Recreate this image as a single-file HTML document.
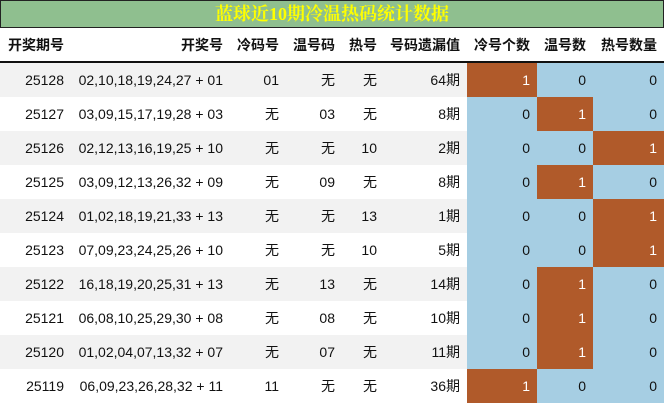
<!DOCTYPE html><html><head><meta charset="utf-8"><style>
body{margin:0;width:664px;height:404px;overflow:hidden;background:#fff;font-family:"Liberation Sans","Noto Sans CJK SC",sans-serif;font-size:14px;color:#111}
.title{position:absolute;left:0;top:0;width:662px;height:26px;background:#8fbf8f;border:1px solid #222;color:#ffff00;font-family:"Liberation Serif","Noto Serif CJK SC",serif;font-weight:bold;font-size:18px;line-height:26px;text-align:center}
table{position:absolute;left:0;top:28px;border-collapse:collapse;table-layout:fixed}
td{padding:0 7px 0 0;text-align:right;height:34px;white-space:nowrap}
tr.h td{font-weight:bold;height:33px;border-bottom:2px solid #111}
tr.g td{background:#f2f2f2}
td.b{background:#a6cee3!important}
td.o{background:#b05a2a!important;color:#fff}
</style></head><body>
<div class="title">蓝球近10期冷温热码统计数据</div>
<table>
<colgroup><col style="width:71px"><col style="width:159px"><col style="width:56px"><col style="width:56px"><col style="width:42px"><col style="width:83px"><col style="width:70px"><col style="width:56px"><col style="width:71px"></colgroup>
<tr class="h"><td>开奖期号</td><td>开奖号</td><td>冷码号</td><td>温号码</td><td>热号</td><td>号码遗漏值</td><td>冷号个数</td><td>温号数</td><td>热号数量</td></tr>
<tr class="g"><td>25128</td><td>02,10,18,19,24,27 + 01</td><td>01</td><td>无</td><td>无</td><td>64期</td><td class="o">1</td><td class="b">0</td><td class="b">0</td></tr>
<tr><td>25127</td><td>03,09,15,17,19,28 + 03</td><td>无</td><td>03</td><td>无</td><td>8期</td><td class="b">0</td><td class="o">1</td><td class="b">0</td></tr>
<tr class="g"><td>25126</td><td>02,12,13,16,19,25 + 10</td><td>无</td><td>无</td><td>10</td><td>2期</td><td class="b">0</td><td class="b">0</td><td class="o">1</td></tr>
<tr><td>25125</td><td>03,09,12,13,26,32 + 09</td><td>无</td><td>09</td><td>无</td><td>8期</td><td class="b">0</td><td class="o">1</td><td class="b">0</td></tr>
<tr class="g"><td>25124</td><td>01,02,18,19,21,33 + 13</td><td>无</td><td>无</td><td>13</td><td>1期</td><td class="b">0</td><td class="b">0</td><td class="o">1</td></tr>
<tr><td>25123</td><td>07,09,23,24,25,26 + 10</td><td>无</td><td>无</td><td>10</td><td>5期</td><td class="b">0</td><td class="b">0</td><td class="o">1</td></tr>
<tr class="g"><td>25122</td><td>16,18,19,20,25,31 + 13</td><td>无</td><td>13</td><td>无</td><td>14期</td><td class="b">0</td><td class="o">1</td><td class="b">0</td></tr>
<tr><td>25121</td><td>06,08,10,25,29,30 + 08</td><td>无</td><td>08</td><td>无</td><td>10期</td><td class="b">0</td><td class="o">1</td><td class="b">0</td></tr>
<tr class="g"><td>25120</td><td>01,02,04,07,13,32 + 07</td><td>无</td><td>07</td><td>无</td><td>11期</td><td class="b">0</td><td class="o">1</td><td class="b">0</td></tr>
<tr><td>25119</td><td>06,09,23,26,28,32 + 11</td><td>11</td><td>无</td><td>无</td><td>36期</td><td class="o">1</td><td class="b">0</td><td class="b">0</td></tr>
</table>
</body></html>
